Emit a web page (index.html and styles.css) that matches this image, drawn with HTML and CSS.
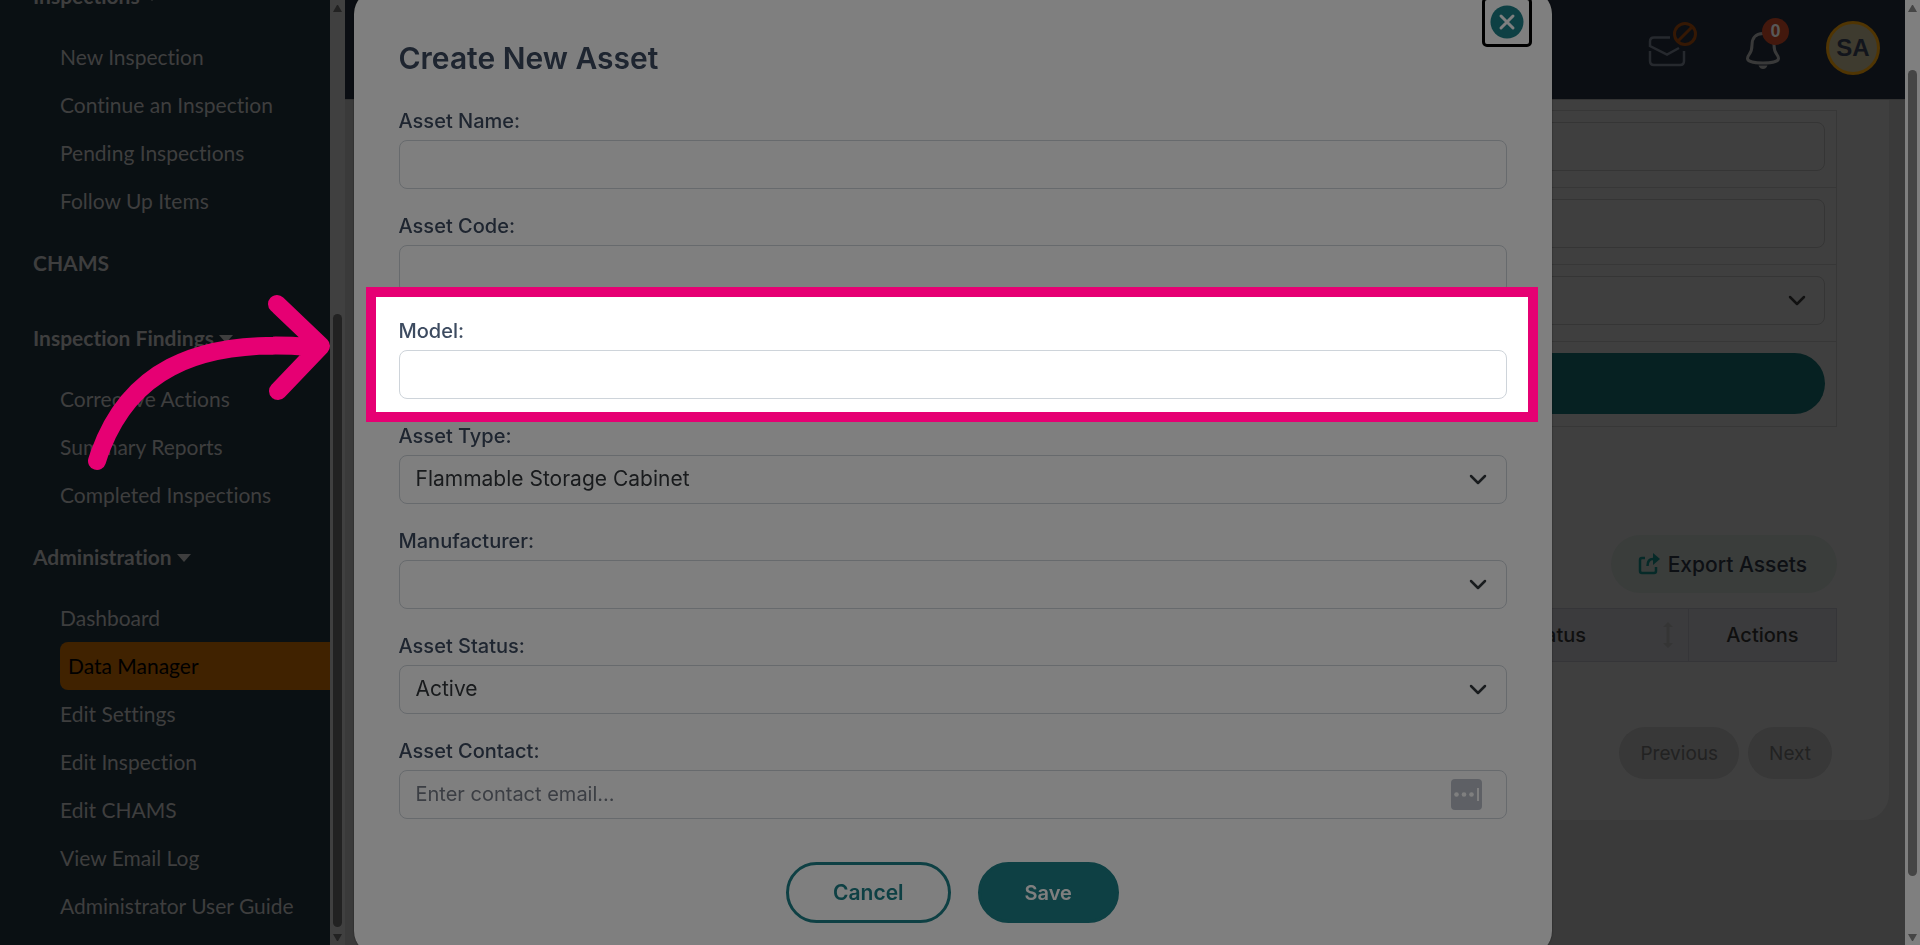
FILE: index.html
```
<!DOCTYPE html>
<html lang="en">
<head>
<meta charset="utf-8">
<title>Data Manager</title>
<link rel="stylesheet" href="styles.css">
</head>
<body>
<div class="app">
  <nav class="sidebar">
    <section class="nav-group">
      <h3 class="nav-heading">Inspections <span class="caret"></span></h3>
      <ul class="nav-list">
        <li><a href="#">New Inspection</a></li>
        <li><a href="#">Continue an Inspection</a></li>
        <li><a href="#">Pending Inspections</a></li>
        <li><a href="#">Follow Up Items</a></li>
      </ul>
    </section>
    <section class="nav-group">
      <h3 class="nav-heading">CHAMS</h3>
      <ul class="nav-list"></ul>
    </section>
    <section class="nav-group">
      <h3 class="nav-heading">Inspection Findings <span class="caret"></span></h3>
      <ul class="nav-list">
        <li><a href="#">Corrective Actions</a></li>
        <li><a href="#">Summary Reports</a></li>
        <li><a href="#">Completed Inspections</a></li>
      </ul>
    </section>
    <section class="nav-group">
      <h3 class="nav-heading">Administration <span class="caret"></span></h3>
      <ul class="nav-list">
        <li><a href="#">Dashboard</a></li>
        <li><a class="active" href="#">Data Manager</a></li>
        <li><a href="#">Edit Settings</a></li>
        <li><a href="#">Edit Inspection</a></li>
        <li><a href="#">Edit CHAMS</a></li>
        <li><a href="#">View Email Log</a></li>
        <li><a href="#">Administrator User Guide</a></li>
      </ul>
    </section>
  </nav>
  <div class="scrollbar scrollbar-side">
    <span class="sb-up"></span><span class="sb-space-side"></span><span class="sb-thumb"></span><span class="sb-down"></span>
  </div>

  <main class="main">
    <header class="topbar">
      <button class="icon-btn" aria-label="Messages">
        <svg width="50" height="50" viewBox="0 0 50 50" fill="none">
          <path d="M23 18.500H7Q3 18.500 3 22.500V27L20 35.500L32 29M3 32V42Q3 46 7 46H33Q37 46 37 42V32" stroke="#4d525c" stroke-width="2.500"/>
          <circle cx="38" cy="15" r="10.500" stroke="#6a3008" stroke-width="3"/>
          <path d="M31 22L45 8" stroke="#6a3008" stroke-width="3"/>
        </svg>
      </button>
      <button class="icon-btn" aria-label="Notifications">
        <svg width="50" height="54" viewBox="0 0 50 54" fill="none">
          <path d="M19 16.500C11 16.500 8 22 8 28C8 38 3.500 37 3.500 41.500C3.500 47.500 34.500 47.500 34.500 41.500C34.500 37 30 38 30 28C30 22 27 16.500 19 16.500Z" stroke="#727272" stroke-width="3"/>
          <path d="M14.500 48.500H23.500Q22 52 19 52Q16 52 14.500 48.500Z" fill="#727272"/>
        </svg>
        <span class="badge">0</span>
      </button>
      <button class="avatar">SA</button>
    </header>
    <div class="card">
      <div class="filters">
        <div class="filter-row"><input class="control" type="text" aria-label="Name filter"></div>
        <div class="filter-row"><input class="control" type="text" aria-label="Code filter"></div>
        <div class="filter-row select-wrap">
          <select class="control" aria-label="Status filter"><option></option></select>
          <svg class="chevron" width="18" height="12" viewBox="0 0 18 12"><path d="M2 2L9 9L16 2"/></svg>
        </div>
        <div class="filter-row"><button class="filter-btn" aria-label="Search"></button></div>
      </div>
      <div class="toolbar">
        <button class="export">
          <svg width="22" height="22" viewBox="0 0 22 22" fill="none">
            <path d="M7 5H4Q2 5 2 7V18Q2 20 4 20H16Q18 20 18 18V14" stroke="#0d5450" stroke-width="2.500"/>
            <path d="M9.500 13Q9.500 6 15 6" stroke="#0d5450" stroke-width="2.500"/>
            <path d="M15 0L22 6L15 12Z" fill="#0d5450"/>
          </svg>
          Export Assets
        </button>
      </div>
      <table class="assets">
        <tr>
          <th>Name</th>
          <th class="col-status">
            <div class="th-inner"><span>Status</span>
              <svg width="10" height="26" viewBox="0 0 10 26"><path d="M5 0L10 5H6.500V21H10L5 26L0 21H3.500V5H0Z" fill="#6a6a6a"/></svg>
            </div>
          </th>
          <th class="col-actions">Actions</th>
        </tr>
      </table>
      <div class="pager">
        <button>Previous</button>
        <button>Next</button>
      </div>
    </div>
  </main>
  <div class="scrollbar scrollbar-page">
    <span class="sb-up"></span><span class="sb-space-page"></span><span class="sb-thumb"></span><span class="sb-space-page"></span><span class="sb-down"></span>
  </div>
</div>

<div class="overlay">
  <form class="modal">
    <button class="close" type="button" aria-label="Close">
      <svg width="34" height="34" viewBox="0 0 34 34"><circle cx="17" cy="17" r="16.500" fill="#1c8088"/><path d="M11 11L23 23M23 11L11 23" stroke="#fff" stroke-width="3" stroke-linecap="round"/></svg>
    </button>
    <h2 class="modal-title">Create New Asset</h2>
    <div class="field"><label for="name">Asset Name:</label><input class="control" id="name" type="text"></div>
    <div class="field"><label for="code">Asset Code:</label><input class="control" id="code" type="text"></div>
    <div class="field highlighted">
      <label for="model">Model:</label><input class="control" id="model" type="text">
      <div class="spotlight">
        <svg class="arrow" width="252" height="180" viewBox="0 0 252 180" fill="none" stroke="#e60073" stroke-width="18" stroke-linecap="round" stroke-linejoin="round">
          <path d="M19 166C47 77 117 43 231 52M199 9L243 51L200 96"/>
        </svg>
      </div>
    </div>
    <div class="field"><label for="type">Asset Type:</label>
      <div class="select-wrap">
        <select class="control" id="type"><option>Flammable Storage Cabinet</option></select>
        <svg class="chevron" width="18" height="12" viewBox="0 0 18 12"><path d="M2 2L9 9L16 2"/></svg>
      </div>
    </div>
    <div class="field"><label for="maker">Manufacturer:</label>
      <div class="select-wrap">
        <select class="control" id="maker"><option></option></select>
        <svg class="chevron" width="18" height="12" viewBox="0 0 18 12"><path d="M2 2L9 9L16 2"/></svg>
      </div>
    </div>
    <div class="field"><label for="status">Asset Status:</label>
      <div class="select-wrap">
        <select class="control" id="status"><option>Active</option></select>
        <svg class="chevron" width="18" height="12" viewBox="0 0 18 12"><path d="M2 2L9 9L16 2"/></svg>
      </div>
    </div>
    <div class="field"><label for="contact">Asset Contact:</label>
      <div class="select-wrap">
        <input class="control" id="contact" type="text" placeholder="Enter contact email...">
        <svg class="autofill" width="31" height="31" viewBox="0 0 31 31">
          <rect width="31" height="31" rx="4" fill="#bcc1cb"/>
          <g fill="#fff"><circle cx="5.500" cy="15.500" r="2.300"/><circle cx="13" cy="15.500" r="2.300"/><circle cx="20.500" cy="15.500" r="2.300"/><rect x="26" y="9" width="2" height="13"/></g>
        </svg>
      </div>
    </div>
    <div class="actions">
      <button class="btn btn-outline" type="button">Cancel</button>
      <button class="btn btn-solid" type="button">Save</button>
    </div>
  </form>
</div>
</body>
</html>
```

FILE: styles.css
```
* { box-sizing: border-box; }

body {
  margin: 0;
  height: 100vh;
  overflow: hidden;
  font-family: Inter, "Open Sans", sans-serif;
  font-size: 20px;
}

button, input, select { font: inherit; margin: 0; }
button { border: 0; cursor: pointer; }

.app { display: flex; height: 100vh; overflow: hidden; }

/* Sidebar */
.sidebar {
  flex: none;
  width: 330px;
  height: 100%;
  overflow: hidden;
  background: #152027;
  font-family: Lato, sans-serif;
  font-size: 21px;
  font-variant-ligatures: none;
  color: #7c7c7c;
  display: flex;
  flex-direction: column;
  gap: 14px;
}
.nav-group:first-child { margin-top: -28px; }
.nav-heading {
  margin: 0;
  padding-left: 33px;
  font-size: 21px;
  font-weight: 700;
  line-height: 48px;
}
.caret {
  display: inline-block;
  border: 7px solid transparent;
  border-top: 8px solid #7c7c7c;
  border-bottom: 0;
  vertical-align: 3px;
}
.nav-list { list-style: none; margin: 13px 0 0; padding: 0 0 0 60px; }
.nav-list a { display: block; line-height: 48px; color: inherit; text-decoration: none; }
.nav-list .active {
  padding-left: 8px;
  border-radius: 8px 0 0 8px;
  background: #804400;
  color: #000;
}

/* Scrollbars */
.scrollbar {
  flex: none;
  width: 15px;
  height: 100%;
  padding: 5px 3px 4px;
  display: flex;
  flex-direction: column;
}
.scrollbar-side { background: #808080; --thumb: #444; }
.scrollbar-page { background: #fff; --thumb: #8a8a8a; }
.sb-up, .sb-down { border: 4px solid transparent; }
.sb-up { border-top: 0; border-bottom: 7px solid var(--thumb); }
.sb-down { border-bottom: 0; border-top: 7px solid var(--thumb); }
.sb-thumb { flex: 14; margin-bottom: 7px; border-radius: 5px; background: var(--thumb); }
.scrollbar-page .sb-thumb { margin: 0; }
.sb-space-side { flex: 6.9; }
.sb-space-page { flex: 1; }

/* Main area */
.main { flex: 1; min-width: 0; background: #757575; overflow: hidden; }
.topbar {
  height: 100px;
  padding: 0 25px 4px;
  display: flex;
  align-items: center;
  justify-content: flex-end;
  gap: 47px;
  background: #161c26;
  border-bottom: 1px solid #666;
}
.icon-btn { position: relative; width: 50px; padding: 0 0 8px; background: none; line-height: 0; }
.badge {
  position: absolute;
  top: 1px;
  left: 18px;
  width: 27px;
  border-radius: 50%;
  background: #86301a;
  color: #b0b0b0;
  font: 700 18px/27px "Liberation Sans", sans-serif;
}
.avatar {
  width: 54px;
  height: 54px;
  margin-left: -15px;
  padding: 0;
  border: 3px solid #a06a06;
  border-radius: 50%;
  background: #7c765e;
  color: #252b38;
  font: 700 24px/48px "Liberation Sans", sans-serif;
}

.card {
  margin: 0 16px 0 20px;
  padding: 10px 52px 41px 32px;
  background: #7f7f7f;
  border-radius: 0 0 26px 26px;
}
.filters { border: 1px solid #6e6e6e; }
.filter-row { padding: 11px; border-bottom: 1px solid #6e6e6e; height: 77px; }
.filter-row:last-child { height: 84px; border-bottom: 0; }
.filter-btn { display: block; width: 100%; height: 61px; border-radius: 31px; background: #0c4244; }
.filters .control { background: #7f7f7f; border-color: #6a6a6a; }

.toolbar { display: flex; justify-content: flex-end; margin-top: 108px; }
.export {
  display: flex;
  align-items: center;
  gap: 8px;
  height: 58px;
  padding: 0 30px 0 27px;
  border-radius: 29px;
  background: #757a77;
  color: #1b2029;
  font-size: 21px;
  font-weight: 500;
}
.assets {
  width: 100%;
  margin-top: 15px;
  border-collapse: collapse;
  table-layout: fixed;
}
.assets th {
  height: 53px;
  padding: 0 15px;
  border: 1px solid #6b6b70;
  background: #77777b;
  color: #1e1e1e;
  font-weight: 500;
}
.assets .col-status { width: 200px; }
.assets .col-actions { width: 148px; }
.th-inner { display: flex; align-items: center; justify-content: flex-end; gap: 77px; }
.pager { display: flex; justify-content: flex-end; gap: 9px; margin: 65px 5px 0 0; }
.pager button {
  height: 52px;
  padding: 0 21px;
  border-radius: 26px;
  background: #707070;
  color: #444;
  font-size: 19px;
}

/* Controls */
.control {
  display: block;
  width: 100%;
  height: 49px;
  padding: 0 16px 2px;
  border: 1px solid #ced4da;
  border-radius: 8px;
  background: #fff;
  color: #33373b;
  font-size: 21px;
  appearance: none;
  outline: 0;
}
.control::placeholder { color: #777d88; opacity: 1; font-size: 20px; }
.select-wrap { position: relative; }
.chevron {
  position: absolute;
  right: 20px;
  top: 19px;
  fill: none;
  stroke: #33383d;
  stroke-width: 2.5;
  stroke-linecap: round;
  stroke-linejoin: round;
  pointer-events: none;
}
.filters .chevron { right: 30px; top: 30px; stroke: #222; }
.autofill { position: absolute; right: 25px; top: 9px; }

/* Modal */
.overlay {
  position: fixed;
  inset: 0 15px 0 0;
  display: flex;
  justify-content: center;
  align-items: center;
}
.modal {
  position: relative;
  flex: none;
  width: 63%;
  max-width: 1198px;
  padding: 50px 45px 32px;
  border-radius: 24px;
  background: #fff;
  box-shadow: 0 0 2px rgba(0, 0, 0, .5);
}
.close {
  position: absolute;
  top: 7px;
  right: 20px;
  width: 50px;
  height: 50px;
  padding: 5px;
  border: 3px solid #000;
  border-radius: 5px;
  background: #fff;
  line-height: 0;
}
.modal-title {
  margin: 0 0 30px;
  color: #3d4b60;
  font-size: 30px;
  font-weight: 600;
  line-height: 36px;
}
.field { margin-bottom: 22px; }
.field label { display: block; margin-bottom: 4px; color: #3d4b60; font-weight: 500; line-height: 30px; }
.highlighted { position: relative; z-index: 2; }
.spotlight {
  position: absolute;
  inset: -29px -31px -23px -33px;
  border: 10px solid #e60073;
  box-shadow: 0 0 0 9999px rgba(0, 0, 0, .5);
  pointer-events: none;
}
.arrow { position: absolute; top: -2px; right: calc(100% + 46px); }
.actions { display: flex; justify-content: center; gap: 27px; margin-top: 43px; }
.btn { height: 61px; padding: 0 44px; border: 3px solid #1c8088; border-radius: 31px; font-weight: 600; }
.btn-outline { background: #fff; color: #1c8088; font-size: 21px; }
.btn-solid { background: #1c8088; color: #fff; }
```
